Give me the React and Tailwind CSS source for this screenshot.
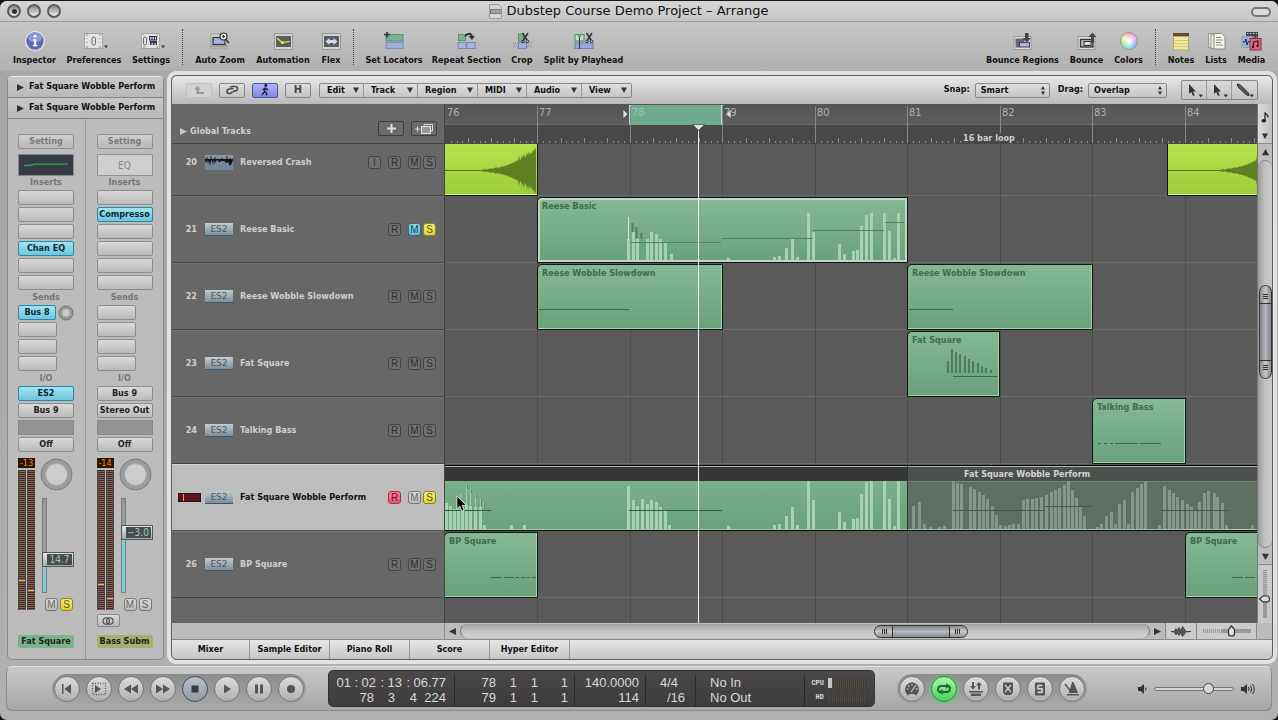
import React from "react";

/* ---------- data ---------- */

const BAR = 92.5;

const tracks = [
  { num: 20, name: "Reversed Crash", audio: true, input: true },
  { num: 21, name: "Reese Basic", mute: true, solo: true },
  { num: 22, name: "Reese Wobble Slowdown" },
  { num: 23, name: "Fat Square" },
  { num: 24, name: "Talking Bass" },
  { num: 25, name: "Fat Square Wobble Perform", selected: true, rec: true, solo: true },
  { num: 26, name: "BP Square" },
];

const reeseBars = [
  [90, 21], [95, 28], [99, 21], [109, 21], [113, 28], [118, 26], [122, 21], [127, 17], [133, 6],
  [190, 2], [236, 3], [241, 4], [248, 12], [254, 21], [259, 3], [270, 47], [275, 28], [301, 16],
  [306, 6], [315, 9], [319, 10], [323, 34], [328, 45], [333, 47], [346, 47], [351, 29], [356, 2], [360, 47],
];

const wobbleBars = [
  [0, 26], [4, 23], [8, 20], [12, 20], [16, 22], [20, 24], [24, 23], [29, 22], [34, 22], [38, 4], [65, 4], [78, 4],
  [182, 43], [187, 29], [191, 23], [196, 30], [201, 25], [205, 29], [210, 27], [214, 22], [219, 19], [223, 4],
  [282, 3], [328, 4], [333, 5], [340, 13], [346, 22], [351, 4], [362, 48], [367, 29], [393, 17], [398, 7],
  [407, 10], [411, 11], [415, 35], [420, 47], [425, 48], [438, 48], [443, 30], [448, 3], [452, 48],
];

const mutedBars = [
  [467, 23], [473, 27], [478, 5], [484, 2], [493, 2], [498, 3], [507, 48], [511, 46], [515, 45], [524, 42],
  [528, 40], [533, 37], [537, 34], [541, 30], [546, 23], [550, 14], [554, 4], [559, 3], [563, 4], [567, 5],
  [572, 5], [577, 29], [581, 30], [586, 30], [590, 31], [595, 32], [600, 34], [605, 37], [609, 39], [613, 41],
  [618, 44], [622, 48], [626, 39], [630, 31], [634, 23], [638, 13], [651, 2], [655, 5], [660, 13], [665, 17],
  [669, 5], [673, 25], [678, 29], [682, 5], [686, 37], [691, 41], [695, 45], [699, 48], [713, 4], [718, 43],
  [723, 39], [727, 36], [731, 32], [736, 29], [741, 25], [745, 22], [749, 19], [753, 27], [758, 36], [762, 38],
  [768, 36], [771, 32], [776, 26], [780, 4], [806, 4],
];

const fatBars = [
  [39, 12, 12], [43, 0, 24], [47, 3, 21], [51, 5, 19], [56, 7, 17], [60, 10, 14], [64, 12, 12], [69, 14, 10], [73, 17, 7], [77, 19, 5], [82, 21, 3],
];

const crash = [
  0, 0, 1, 0, 1, 1, 0, 1, 1, 2, 1, 2, 1, 2, 2, 3, 2, 3, 2, 3, 3, 4, 3, 4, 4, 5, 4, 6, 5, 6, 7, 6, 8, 7, 9,
  8, 10, 9, 15, 10, 11, 15, 12, 17, 12, 14, 18, 14, 19, 15, 18, 16, 21, 18, 23, 20,
];

/* ---------- small parts ---------- */

const Tri = ({ dir = "right", s = 7, fill = "#333" }) => {
  const d = { right: "M0 0L10 5L0 10z", left: "M10 0L0 5L10 10z", down: "M0 1L10 1L5 10z", up: "M0 9L10 9L5 0z" }[dir];
  return (
    <svg width={s} height={s} viewBox="0 0 10 10" className="shrink-0" aria-hidden="true">
      <path d={d} fill={fill} />
    </svg>
  );
};

function ToolButton({ label, w, children }) {
  return (
    <button className={"flex shrink-0 flex-col items-center gap-px " + w}>
      <span className="flex h-6 items-center justify-center">{children}</span>
      <span className="text-[9px] leading-[12px] font-bold whitespace-nowrap">{label}</span>
    </button>
  );
}

const Sep = () => <div className="mx-px h-9 w-px shrink-0 border-l border-dotted border-[#444]" />;

const toneOff = "border-[#777] bg-linear-to-b from-[#dadada] to-[#bcbcbc] text-[#666]";
const toneDark = "border-[#444] bg-[#707070] text-[#2e2e2e]";
const toneYellow = "border-[#8d8420] bg-linear-to-b from-[#f3ec6e] to-[#dcd23c] text-[#5c5610]";
const toneBlue = "border-[#2e6d82] bg-linear-to-b from-[#8fd9ee] to-[#5db9d4] text-[#174a5c]";
const tonePink = "border-[#a5304f] bg-linear-to-b from-[#ff7d9b] to-[#ee4f75] text-[#6d0f28]";

function Mini({ letter, tone, label }) {
  return (
    <button
      aria-label={label}
      className={
        "flex h-[13px] w-[13px] shrink-0 items-center justify-center rounded-[3px] border font-['Liberation_Sans',sans-serif] text-[10px] leading-[11px] " +
        tone
      }
    >
      {letter}
    </button>
  );
}

/* ---------- toolbar icons ---------- */

const InfoIcon = () => (
  <svg width="22" height="22" viewBox="0 0 22 22">
    <circle cx="11" cy="11" r="10" fill="#e9e9f2" />
    <circle cx="11" cy="11" r="8.7" fill="#5d6cb4" />
    <ellipse cx="11" cy="7.5" rx="7" ry="5" fill="#8d99d3" />
    <circle cx="11" cy="6.3" r="1.5" fill="#fff" />
    <path d="M9 9.3h3.2v5.8h1.3v1.2H8.8v-1.2h1.3v-4.6H9z" fill="#fff" />
  </svg>
);
const PrefIcon = () => (
  <svg width="24" height="18" viewBox="0 0 24 18" className="ml-[3px]">
    <rect x=".5" y="1.5" width="18" height="15" fill="#e3e3e3" stroke="#a5a5a5" />
    <path d="M2 3h2M15 3h2M2 15h2M15 15h2M3 6v1M3 10v1M16 6v1M16 10v1" stroke="#888" />
    <rect x="8" y="5" width="3.5" height="8" rx="1.7" fill="none" stroke="#666" />
    <path d="M20 13.5h4l-2 2.8z" fill="#333" />
  </svg>
);
const SettingsIcon = () => (
  <svg width="24" height="18" viewBox="0 0 24 18" className="ml-[3px]">
    <rect x=".5" y="1.5" width="18" height="15" fill="#e3e3e3" stroke="#a5a5a5" />
    <rect x="2.5" y="5" width="3" height="8" rx="1.5" fill="none" stroke="#666" />
    <rect x="8" y="4" width="8" height="4.5" fill="#cdd0de" />
    <path d="M8 4.500h8M8 8h8M8.500 4v4M11 4v4M13.500 4v4M15.700 4v4" stroke="#30334a" />
    <path d="M8.500 9h7.500v4h-1.300v-2.300h-1.200V13h-1.700v-2.300h-1.200V13H9V11z" fill="#30334a" />
    <path d="M2 3h1M16 3h1M2 15h2M15 15h2" stroke="#888" />
    <path d="M20 13.500h4l-2 2.800z" fill="#333" />
  </svg>
);
const AutoZoomIcon = () => (
  <svg width="20" height="18" viewBox="0 0 20 18">
    <rect x="1" y="2" width="16" height="14" fill="#d4d4d4" stroke="#999" />
    <rect x="3" y="5.500" width="12" height="7" fill="#a7aee0" stroke="#333" strokeWidth="1.200" />
    <path d="M1 14h16" stroke="#777" />
    <circle cx="13.500" cy="4.500" r="3.500" fill="#eee" stroke="#333" strokeWidth="1.200" />
    <path d="M12 4.500h3M13.500 3v3M16 7.500l3 3.500" stroke="#333" strokeWidth="1.200" />
  </svg>
);
const AutomationIcon = () => (
  <svg width="19" height="17" viewBox="0 0 19 17">
    <rect x=".5" y=".5" width="18" height="16" fill="#d2d2d2" stroke="#999" />
    <rect x="2" y="3" width="15" height="11" fill="#585e58" />
    <path d="M3 5l5 4.500L16 8.500" stroke="#e8e34c" fill="none" strokeWidth="1.200" />
    <circle cx="8.500" cy="9.500" r="1.600" fill="#e8e34c" />
  </svg>
);
const FlexIcon = () => (
  <svg width="19" height="17" viewBox="0 0 19 17">
    <rect x=".5" y=".5" width="18" height="16" fill="#d2d2d2" stroke="#999" />
    <rect x="2" y="3" width="15" height="11" fill="#585d63" />
    <path d="M3.500 8.500l4-3.500v2h4V5l4 3.500-4 3.500v-2h-4v2z" fill="#cfd8e6" />
  </svg>
);
const LocatorsIcon = () => (
  <svg width="20" height="18" viewBox="0 0 20 18">
    <rect x="2" y="2.500" width="17" height="6.500" fill="#77b295" stroke="#5b9478" />
    <rect x="2" y="10.500" width="17" height="6" fill="#9fb0da" stroke="#7f90b8" />
    <path d="M0 2.500h6M3 0v5.500" stroke="#333" strokeWidth="1.600" />
  </svg>
);
const RepeatIcon = () => (
  <svg width="19" height="18" viewBox="0 0 19 18">
    <rect x="1.500" y="2.500" width="7" height="6" fill="#77b295" stroke="#5b9478" />
    <rect x="1" y="10.500" width="8" height="6" fill="#a6b8de" stroke="#7486ae" />
    <rect x="10" y="10.500" width="8" height="6" fill="#a6b8de" stroke="#7486ae" />
    <path d="M8 4.500C10.500.5 14 1 15 4" stroke="#333" fill="none" strokeWidth="2" />
    <path d="M11.500 4h6.500l-3 4z" fill="#333" />
  </svg>
);
const Scissors = ({ x }) => (
  <g transform={"translate(" + x + " 0)"} stroke="#333" fill="none">
    <path d="M1 1l4.500 7M6.500 1L2 8" strokeWidth="1.500" />
    <circle cx="1.500" cy="9.300" r="1.300" />
    <circle cx="6" cy="9.300" r="1.300" />
  </g>
);
const CropIcon = () => (
  <svg width="19" height="18" viewBox="0 0 19 18">
    <rect x="5.500" y="2" width="5" height="7" fill="#77b295" stroke="#5b9478" />
    <path d="M0 11h19M1 13h18M0 15h19" stroke="#7f8cae" strokeDasharray="1 1" />
    <rect x="5.500" y="10.500" width="8" height="6" fill="#a6b0de" stroke="#7486ae" />
    <Scissors x={8.5} />
  </svg>
);
const SplitIcon = () => (
  <svg width="20" height="18" viewBox="0 0 20 18">
    <rect x="1" y="2.500" width="9" height="6.500" fill="#c6dccf" stroke="#4b8468" />
    <rect x="1" y="11" width="18" height="5.500" fill="#8fa9dd" stroke="#6c80b2" />
    <path d="M2.500 2h6L5.500 6z" fill="#5a9c79" />
    <path d="M5.500 5v12" stroke="#333" />
    <Scissors x={11.5} />
  </svg>
);
const BounceIcon = ({ up }) => (
  <svg width="20" height="19" viewBox="0 0 20 19">
    <rect x="1" y="4.500" width="17" height="13" fill="#dadada" stroke="#999" />
    {up ? (
      <g>
        <rect x="3.500" y="7.500" width="12.500" height="7.500" fill="#bbb" stroke="#333" strokeWidth="1.300" />
        <rect x="7" y="9.500" width="7" height="4" fill="#d5d9ee" stroke="#333" />
        <path d="M14 11V5h-2.700L15.500.5 19.500 5H17v6z" fill="#444" />
      </g>
    ) : (
      <g>
        <path d="M2.500 6.500h9v4h-5v5h-4z" fill="#666" />
        <rect x="6.500" y="10.500" width="10" height="4.500" fill="#aab0e0" stroke="#444" />
        <path d="M12 1v5H9.500l4.300 4.500L18 6h-2.500V1z" fill="#444" />
      </g>
    )}
  </svg>
);
const ColorsIcon = () => (
  <div className="h-[18px] w-[18px] rounded-full border border-[#999] bg-[radial-gradient(circle,#fff_5%,transparent_70%),conic-gradient(#f5a0a8,#e7a7ee,#93a6f4,#7fe3ee,#86e88f,#f0ee86,#f5a0a8)]" />
);
const NotesIcon = () => (
  <svg width="18" height="19" viewBox="0 0 18 19">
    <rect x="1" y="1" width="16" height="4" fill="#5b4c33" />
    <rect x="1.500" y="4.500" width="15" height="13.500" fill="#eeeaa0" stroke="#b3ab65" />
    <path d="M2 8.500h14M2 11.500h14M2 14.500h14" stroke="#cfc87c" />
  </svg>
);
const ListsIcon = () => (
  <svg width="19" height="19" viewBox="0 0 19 19">
    <rect x="1.500" y="1.500" width="11" height="14" fill="#e3e3dc" stroke="#999" />
    <rect x="4" y="2.500" width="10" height="14" fill="#eeeee4" stroke="#999" />
    <path d="M7 1.500h8l3 3v12.500H7z" fill="#f5f5e6" stroke="#888" />
    <path d="M9 5.500h5M9 8h7M9 10.500h5M9 13h7" stroke="#888" />
  </svg>
);
const MediaIcon = () => (
  <svg width="21" height="20" viewBox="0 0 21 20">
    <rect x="5" y="1" width="12" height="6" fill="#444" />
    <path d="M6 2.500h10M6 6h10" stroke="#ccc" strokeDasharray="1.500 1.500" />
    <rect x="1" y="5.500" width="10" height="11" fill="#9db1d6" stroke="#8fa1c4" />
    <path d="M2 11h2l1-3 1 6 1.500-4 1 1h2" stroke="#1d2a4a" fill="none" />
    <rect x="9" y="7.500" width="11" height="11.500" fill="#d8697f" stroke="#8d2f44" />
    <path d="M12.500 16v-5l4.500-1v5" stroke="#4c0c1b" fill="none" strokeWidth="1.200" />
    <circle cx="12" cy="16" r="1.200" fill="#4c0c1b" />
    <circle cx="16.500" cy="15" r="1.200" fill="#4c0c1b" />
  </svg>
);

/* ---------- inspector ---------- */

const slotBase =
  "flex h-[15px] items-center justify-center overflow-hidden whitespace-nowrap rounded-[2px] border text-[9px] leading-[13px] font-bold ";
const slotGrey = "border-[#8c8c8c] bg-linear-to-b from-[#d9d9d9] to-[#bababa] text-[#222] ";
const slotBlue = "border-[#2b87a5] bg-linear-to-b from-[#a5e3f2] to-[#6cc5dc] text-[#0b2a36] ";

const Slot = ({ text, blue, w = "w-full" }) => (
  <button aria-label={text || "Empty slot"} className={slotBase + (blue ? slotBlue : slotGrey) + w}>
    {text}
  </button>
);
const StripLabel = ({ children }) => (
  <div className="h-[15px] text-center text-[9px] leading-[15px] font-bold text-[#757575]">{children}</div>
);

function Strip({ pad, setting, eq, inserts, sends, inst, out, peak, fader, value, solo, stereo, name, nameTone, lit }) {
  return (
    <div className={"flex flex-1 flex-col pt-[15px] " + pad}>
      <div className="flex w-14 flex-col">
        <button className={slotBase + "border-[#909090] bg-linear-to-b from-[#cfcfcf] to-[#b8b8b8] text-[#7a7a7a]"}>{setting}</button>
        {eq ? (
          <svg width="56" height="22" viewBox="0 0 56 22" className="mt-[5px] -mb-px border border-[#888] bg-[#363b48]">
            <path d="M4 11.500h6l5-1.500h37" stroke="#2fae3a" strokeWidth="1.500" fill="none" />
          </svg>
        ) : (
          <button className="mt-[5px] -mb-px h-[22px] border border-[#909090] bg-[#cfcfcf] text-[10px] text-[#888]">EQ</button>
        )}
        <StripLabel>Inserts</StripLabel>
        <div className="flex flex-col gap-[2px]">
          {inserts.map((t, i) => (
            <Slot key={i} text={t} blue={!!t} />
          ))}
        </div>
        <StripLabel>Sends</StripLabel>
        <div className="flex flex-col gap-[2px]">
          {sends.map((t, i) => (
            <div key={i} className="flex h-[15px] items-center gap-[2px]">
              <Slot text={t} blue={!!t} w="w-[39px]" />
              {t && (
                <svg width="16" height="16" viewBox="0 0 16 16" className="shrink-0">
                  <circle cx="8" cy="8" r="7" fill="#9c9c9c" stroke="#6e6e6e" />
                  <circle cx="8" cy="8" r="4.300" fill="#cacaca" stroke="#808080" strokeWidth=".6" />
                  <path d="M3 10.500a5.500 5.500 0 0 0 1.500 2" stroke="#4fc77a" strokeWidth="1.500" fill="none" />
                </svg>
              )}
            </div>
          ))}
        </div>
        <StripLabel>I/O</StripLabel>
        <div className="flex flex-col gap-[2px]">
          <Slot text={inst} blue={eq} />
          <Slot text={out} />
          <div className="h-[15px] border border-[#888] bg-[#939393]" />
          <Slot text="Off" />
        </div>
        <div className="mt-[6px] flex h-[153px] gap-[5px]">
          <div className="flex w-[17px] flex-col gap-[2px]">
            <div className="h-[10px] bg-[#2a1503] text-center text-[9px] leading-[10px] text-[#f08a1c]">{peak}</div>
            <div className="flex h-[140px] gap-px">
              {lit.map((y, i) => (
                <div key={i} className="flex-1 border-x border-[#4b4340] bg-[repeating-linear-gradient(#4a2c27_0_1px,#7d6259_1px_2px)]">
                  <div className="border-b border-[#e8b84a]" style={{ height: y }} />
                </div>
              ))}
            </div>
          </div>
          <div className="flex w-[33px] flex-col">
            <svg width="33" height="33" viewBox="0 0 33 33" className="shrink-0">
              <circle cx="16.500" cy="16.500" r="15.500" fill="#9d9d9d" stroke="#7c7c7c" />
              <circle cx="16.500" cy="16.500" r="11" fill="#cdcdcd" stroke="#a5a5a5" />
            </svg>
            <div className="relative mt-[7px] h-[95px]">
              <div className="ml-[2px] flex h-full w-[5px] flex-col border border-[#7d7d7d] bg-[#999]">
                <div className="mt-auto bg-[#7fd0de]" style={{ height: 93 - fader }} />
              </div>
              <div
                className="absolute left-[2px] flex h-[15px] w-[32px] items-center border border-[#555] bg-linear-to-b from-[#e8e8e8] to-[#aaa] pr-px pl-1"
                style={{ top: fader }}
              >
                <span className="flex h-[11px] flex-1 items-center justify-center bg-[#454d4d] text-[10px] text-[#a5c4c2]">{value}</span>
              </div>
              <input type="range" aria-label={name + " volume"} className="absolute inset-0 h-full w-full cursor-pointer opacity-0" />
            </div>
            <div className="mt-[5px] flex justify-between pl-[5px]">
              <Mini letter="M" label="Mute" tone={toneOff} />
              <Mini letter="S" label="Solo" tone={solo ? toneYellow : toneOff} />
            </div>
          </div>
        </div>
        <div className="mt-[3px] h-[13px]">
          {stereo && (
            <button aria-label="Stereo" className="flex h-full w-[23px] items-center justify-center rounded-[2px] border border-[#878787] bg-linear-to-b from-[#d9d9d9] to-[#bababa]">
              <svg width="12" height="8" viewBox="0 0 12 8" fill="none" stroke="#444" strokeWidth="1.100">
                <circle cx="4.200" cy="4" r="3.200" />
                <circle cx="7.800" cy="4" r="3.200" />
              </svg>
            </button>
          )}
        </div>
        <div className={"mt-2 h-[13px] overflow-hidden rounded-[2px] text-center text-[9px] leading-[13px] font-bold whitespace-nowrap text-[#222] " + nameTone}>{name}</div>
      </div>
    </div>
  );
}

function Inspector() {
  return (
    <aside className="mt-[5px] mb-1 flex w-[157px] shrink-0 flex-col rounded-[5px] border border-[#888] border-t-[#e6e6e6] bg-[#bcbcbc]">
      {[0, 1].map((i) => (
        <button key={i} className="flex h-[21px] items-center gap-[5px] border-b border-[#858585] bg-linear-to-b from-[#c8c8c8] to-[#b9b9b9] pl-[9px] text-[9px] font-bold">
          <Tri s={7} />
          <span className="whitespace-nowrap">Fat Square Wobble Perform</span>
        </button>
      ))}
      <div className="flex flex-1">
        <Strip
          pad="border-r border-[#999] pl-[10px]"
          setting="Setting"
          eq
          inserts={["", "", "", "Chan EQ", "", ""]}
          sends={["Bus 8", "", "", ""]}
          inst="ES2"
          out="Bus 9"
          peak="-13"
          fader={54}
          value="14.7"
          solo
          name="Fat Square"
          nameTone="bg-[#7ab48a]"
          lit={[111, 121]}
        />
        <Strip
          pad="pl-[11px]"
          setting="Setting"
          inserts={["", "Compresso", "", "", "", ""]}
          sends={["", "", "", ""]}
          inst="Bus 9"
          out="Stereo Out"
          peak="-14"
          fader={27}
          value="−3.0"
          stereo
          name="Bass Subm"
          nameTone="bg-[#a8ae6c]"
          lit={[115, 129]}
        />
      </div>
    </aside>
  );
}

/* ---------- arrange area ---------- */

const iconBtn = "flex h-[15px] w-[26px] items-center justify-center rounded-[2px] border ";

function MenuBar() {
  const menus = [
    ["Edit", "w-[44px]"],
    ["Track", "w-[54px]"],
    ["Region", "w-[60px]"],
    ["MIDI", "w-[49px]"],
    ["Audio", "w-[55px]"],
    ["View", "w-[49px]"],
  ];
  const select =
    "h-[15px] appearance-none rounded-[2px] border border-[#888] bg-linear-to-b from-[#dedede] to-[#c6c6c6] pl-[5px] leading-[12px] ";
  const arrows = (
    <span className="pointer-events-none absolute top-[3px] right-[5px] flex flex-col gap-px">
      <Tri dir="up" s={4} />
      <Tri dir="down" s={4} />
    </span>
  );
  return (
    <div className="flex h-7 items-center bg-linear-to-b from-[#e9e9e9] to-[#b9b9b9] pr-[14px] pl-[14px] text-[9px] font-bold">
      <div className="flex gap-[7px]">
        <button aria-label="Up" className={iconBtn + "border-[#c2c2c2] bg-[#d2d2d2]"}>
          <svg width="11" height="9" viewBox="0 0 11 9"><path d="M3.500 0L0 3.500h2.500V8H10V6H5V3.500h2z" fill="#999" /></svg>
        </button>
        <button aria-label="Link" className={iconBtn + "border-[#888] bg-linear-to-b from-[#ddd] to-[#c4c4c4]"}>
          <svg width="13" height="10" viewBox="0 0 13 10" fill="none" stroke="#444" strokeWidth="1.600">
            <path d="M7 6.500L10.500 5.500a2.200 2.200 0 0 0-.5-4H6a3 3 0 0 0-2 1" />
            <path d="M7.500 3.500L3.500 4A2.200 2.200 0 0 0 3 8.500h1a3 3 0 0 0 2.500-2" />
          </svg>
        </button>
        <button aria-label="Catch" className={iconBtn + "border-[#4a52a8] bg-linear-to-b from-[#b0b5f2] to-[#8088dc]"}>
          <svg width="10" height="12" viewBox="0 0 10 12" stroke="#23264d" fill="none" strokeWidth="1.500">
            <circle cx="5.800" cy="1.500" r=".8" />
            <path d="M5 3.500L4.500 7l2 2v2.500M4.500 7.500L2 11M5 4L2.500 6M5.500 4.500L8 6" />
          </svg>
        </button>
        <button className={iconBtn + "border-[#888] bg-linear-to-b from-[#ddd] to-[#c4c4c4] text-[11px] text-[#444]"}>H</button>
      </div>
      <div className="ml-2 flex h-[15px] divide-x divide-[#999] rounded-[2px] border border-[#888] bg-linear-to-b from-[#dedede] to-[#c6c6c6]">
        {menus.map(([m, w]) => (
          <button key={m} className={"flex items-center justify-between pr-[4px] pl-[7px] leading-[13px] " + w}>
            {m}
            <Tri dir="down" s={6} />
          </button>
        ))}
      </div>
      <div className="ml-auto flex items-center">
        <label htmlFor="snap">Snap:</label>
        <div className="relative ml-[5px]">
          <select id="snap" className={select + "w-[75px]"}>
            <option>Smart</option>
          </select>
          {arrows}
        </div>
        <label htmlFor="drag" className="ml-2">Drag:</label>
        <div className="relative ml-[5px]">
          <select id="drag" className={select + "w-[79px]"}>
            <option>Overlap</option>
          </select>
          {arrows}
        </div>
        <div className="ml-[14px] flex h-5 divide-x divide-[#999] rounded-[2px] border border-[#888] bg-linear-to-b from-[#dadada] to-[#c2c2c2]">
          {["Left-click tool", "Command-click tool", "Pencil tool"].map((t, i) => (
            <button key={t} aria-label={t} className="flex w-[25px] items-center justify-center">
              <svg width="18" height="15" viewBox="0 0 18 15">
                {i < 2 ? (
                  <path d="M4 1v10l2.300-2 1.700 4 1.700-.8L8 8.500h3z" fill="#333" />
                ) : (
                  <path d="M1 1l3 .5 8.500 8.500 .5 2.500-2.500-.5L2 4z" fill="#555" stroke="#222" strokeWidth=".8" />
                )}
                <path d="M13.500 11.500h4.500l-2.200 2.800z" fill="#333" />
              </svg>
            </button>
          ))}
        </div>
      </div>
    </div>
  );
}

function TrackIcon({ audio }) {
  if (audio)
    return (
      <svg width="28" height="15" viewBox="0 0 28 15">
        <rect width="28" height="15" fill="#74869b" />
        <rect width="28" height="3" fill="#8d969e" />
        <path d="M0 4h28v1l-1.500 4-1.500 2-2-4-2 1-2-2-3 0-2 1.500-1.500-2.500-1.500 1L10 9 9 5 8 10 7 5.500 6 6 5 11 4 5.500 3 9 2 5 1 8 0 6z" fill="#14161a" />
        <path d="M2 4V2M6 4V1M10 4V2M17 4V3M22 4V1M25 4V3" stroke="#14161a" />
      </svg>
    );
  return (
    <span className="flex h-[13px] w-[28px] items-center justify-center border-b border-[#3f5468] bg-linear-to-b from-[#c3cccf] to-[#7d8f9b] font-['DejaVu_Sans',sans-serif] text-[9px] leading-[12px] text-[#4a5a64]">
      ES2
    </span>
  );
}

function TrackRow({ t }) {
  const sel = t.selected;
  const off = sel ? toneOff : toneDark;
  return (
    <li
      className={
        "flex shrink-0 items-end overflow-hidden border-b text-[9px] " +
        (t.num === 20 ? "h-[52px] " : "h-[67px] ") +
        (sel ? "border-[#555] bg-[#bdbdbd] text-[#111]" : "border-[#464646] bg-[#676767] text-[#cfcfcf]")
      }
    >
      <div className={"flex h-[66px] w-full shrink-0 items-center border-t pr-2 pl-[5px] " + (sel ? "border-[#d0d0d0]" : "border-[#727272]")}>
        <span className="mr-2 flex w-5 justify-end font-bold">
          {sel ? (
            <span className="-mr-1 flex h-[9px] w-[23px] shrink-0 border border-[#2a1110] bg-[#5a1420] pl-1">
              <span className="w-px bg-[#f0a030]" />
            </span>
          ) : (
            t.num
          )}
        </span>
        <TrackIcon audio={t.audio} />
        <span className="ml-[7px] font-bold whitespace-nowrap">{t.name}</span>
        <div className="ml-auto flex">
          {t.input && (
            <span className="mr-[7px]">
              <Mini letter="I" label="Input" tone={off} />
            </span>
          )}
          <Mini letter="R" label="Record enable" tone={t.rec ? tonePink : off} />
          <span className="mr-[2px] ml-[7px]">
            <Mini letter="M" label="Mute" tone={t.mute ? toneBlue : off} />
          </span>
          <Mini letter="S" label="Solo" tone={t.solo ? toneYellow : off} />
        </div>
      </div>
    </li>
  );
}

function Region({ x, w, name, selected, children }) {
  return (
    <div
      className="absolute top-px h-[66px] overflow-hidden rounded-tl-[5px] border border-[#0d1a10] bg-linear-to-b from-[#84b993] to-[#69a17a]"
      style={{ left: x, width: w }}
    >
      <div className={"h-full rounded-tl-[4px] " + (selected ? "border-2 border-[#c5d3c8]" : "border-r border-b border-[#a6d2b2]")} />
      <span className="absolute top-[2px] left-1 text-[9px] leading-[12px] font-bold whitespace-nowrap text-[#3d6c4c]">{name}</span>
      {children}
    </div>
  );
}

function CrashRegion({ x, w, start, edge }) {
  const top = crash.map((h, i) => start + i + " " + (26 - h)).join("L");
  const bot = crash.map((h, i) => start + i + " " + (27 + h)).reverse().join("L");
  return (
    <div
      className={"absolute top-0 h-[52px] overflow-hidden border-r border-b border-[#141a05] bg-linear-to-b from-[#b3e44d] to-[#9ccd3a] " + (edge ? "border-l" : "")}
      style={{ left: x, width: w }}
    >
      <svg width="110" height="52" viewBox="0 0 110 52">
        <path d={"M0 26.500H" + (start + 5)} stroke="#566f1b" />
        <path d={"M" + top + "L" + bot + "z"} fill="#5f7f22" />
        <path d="M0 50.500h110" stroke="#d5f092" />
      </svg>
    </div>
  );
}

const Overlay = ({ w, h, children }) => (
  <svg width={w} height={h} viewBox={"0 0 " + w + " " + h} className="absolute top-0 left-0">
    {children}
  </svg>
);

function Lane({ short, children }) {
  return <div className={"relative shrink-0 border-b border-[#6b6b6b] " + (short ? "h-[52px]" : "h-[67px]")}>{children}</div>;
}

function Ruler() {
  const ticks = [];
  for (let i = 0; i < 16 * 9; i++) if (i % 16) ticks.push(i);
  return (
    <div className="relative h-10 shrink-0 overflow-hidden bg-[#484848]">
      <div className="h-[21px] border-b border-[#6a6a6a] bg-linear-to-b from-[#545454] to-[#5d5d5d]" />
      <div className="absolute top-px h-5 border-x-2 border-[#b9dcc8] bg-[#6fab8e]" style={{ left: 184, width: 94 }} />
      <svg width="900" height="40" viewBox="0 0 900 40" className="absolute top-0 left-0">
        {ticks.map((i) => (
          <path key={i} d={"M" + (Math.round((i * BAR) / 16) + 0.5) + " " + (i % 4 ? 37 : 34) + "V39"} stroke="#8b8b8b" />
        ))}
        {[1, 2, 3, 4, 5, 6, 7, 8].map((b) => (
          <path key={b} d={"M" + (Math.floor(b * BAR) + 0.5) + " 2V39"} stroke="#888" />
        ))}
        <path d="M178 5v10l5-5zM286 5v10l-5-5z" fill="#ddd" stroke="#333" strokeWidth=".6" />
      </svg>
      {[76, 77, 78, 79, 80, 81, 82, 83, 84].map((b, i) => (
        <span
          key={b}
          className={"absolute top-px text-[11px] leading-[15px] " + (b === 78 ? "text-[#93c6ac]" : "text-[#b0b0b0]")}
          style={{ left: Math.floor(i * BAR) + 2 }}
        >
          {b}
        </span>
      ))}
      <span className="absolute top-[29px] left-[516px] bg-[#484848] px-[2px] text-[9px] leading-[11px] font-bold text-[#cfcfcf]">16 bar loop</span>
    </div>
  );
}

function Timeline() {
  return (
    <div className="relative flex min-w-0 flex-1 flex-col overflow-hidden">
      <Ruler />
      <div className="relative flex flex-1 flex-col bg-[#5a5a5a]">
        <div className="absolute inset-0">
          <svg width="900" height="480" viewBox="0 0 900 480">
            {[1, 2, 3, 4, 5, 6, 7, 8].map((b) => (
              <path key={b} d={"M" + (Math.floor(b * BAR) + 0.5) + " 0V480"} stroke="#4b4b4b" />
            ))}
          </svg>
        </div>
        <Lane short>
          <CrashRegion x={0} w={93} start={36} />
          <CrashRegion x={722} w={111} start={51} edge />
        </Lane>
        <Lane>
          <Region x={92} w={371} name="Reese Basic" selected>
            <Overlay w={369} h={64}>
              {reeseBars.map(([x, h]) => (
                <rect key={x} x={x - 1} y={62 - h} width="3" height={h} fill="#a6d2b3" />
              ))}
              <path d="M90.500 19V42" stroke="#cfe6d4" />
              <path d="M94.500 25v9M98.500 29v11M103.500 35v6" stroke="#4f7f5e" strokeWidth="2" />
              <path d="M92 44.500h91M184 40.500h91M275 32.500h71M347 24.500h19" stroke="#4e8260" />
            </Overlay>
          </Region>
        </Lane>
        <Lane>
          <Region x={92} w={186} name="Reese Wobble Slowdown">
            <Overlay w={184} h={64}><path d="M1 44.500h90" stroke="#38694a" /></Overlay>
          </Region>
          <Region x={462} w={186} name="Reese Wobble Slowdown">
            <Overlay w={184} h={64}><path d="M1 44.500h44" stroke="#38694a" /></Overlay>
          </Region>
        </Lane>
        <Lane>
          <Region x={462} w={93} name="Fat Square">
            <Overlay w={91} h={64}>
              {fatBars.map(([x, y, h]) => (
                <rect key={x} x={x} y={17 + y} width="2" height={h} fill="#4c7d5b" />
              ))}
              <path d="M45 44.500h45" stroke="#38694a" />
            </Overlay>
          </Region>
        </Lane>
        <Lane>
          <Region x={647} w={94} name="Talking Bass">
            <Overlay w={92} h={64}>
              <path d="M5 44.500h3M11 44.500h3M17 44.500h3M22 44.500h23M47 44.500h21" stroke="#38694a" />
            </Overlay>
          </Region>
        </Lane>
        <Lane>
          <div className="absolute top-px right-0 left-0 h-[66px] overflow-hidden border-y border-black bg-linear-to-b from-[#7fb58f] to-[#69a17a]">
            <Overlay w={900} h={64}>
              <rect x="463" y="0" width="437" height="64" fill="#5f6d62" />
              <rect x="0" y="0" width="463" height="15" fill="#353735" />
              <rect x="463" y="0" width="437" height="15" fill="#4b504c" />
              <path d="M0 .5H900" stroke="#b5b5b5" />
              <path d="M463 15.500H900" stroke="#75877a" />
              <path d="M0 63.500H900" stroke="#a6d2b2" />
              <path d="M462.500 0V64" stroke="#2a3a2f" />
              {wobbleBars.map(([x, h]) => (
                <rect key={x} x={x} y={63 - h} width="3" height={h} fill="#a6d2b3" />
              ))}
              {mutedBars.map(([x, h]) => (
                <rect key={x} x={x} y={63 - h} width="3" height={h} fill="#85978a" />
              ))}
              <path d="M15.500 28V43M21.500 19v22M25.500 23v18M30.500 28v15M35.500 33v10M38.500 36v6" stroke="#9fcdad" />
              <path d="M22.500 19v4M26.500 24v3M31.500 29v3M36.500 34v6M39.500 37v5" stroke="#4f7f5e" />
              <path d="M0 44.500h46M184 44.500h93" stroke="#2f5a3e" />
              <path d="M508 44.500h92M600 40.500h47M716 44.500h68" stroke="#4a554d" />
            </Overlay>
            <span className="absolute top-[2px] left-[519px] text-[9px] leading-[12px] font-bold whitespace-nowrap text-[#d5d5d5]">Fat Square Wobble Perform</span>
          </div>
        </Lane>
        <Lane>
          <Region x={-1} w={94} name="BP Square">
            <Overlay w={92} h={64}><path d="M46 44.500h11M59 44.500h10M71 44.500h3M76 44.500h4M82 44.500h3M87 44.500h4" stroke="#38694a" /></Overlay>
          </Region>
          <Region x={740} w={94} name="BP Square">
            <Overlay w={92} h={64}><path d="M46 44.500h11M59 44.500h10M71 44.500h3" stroke="#38694a" /></Overlay>
          </Region>
        </Lane>
      </div>
      <div className="pointer-events-none absolute top-5 bottom-0 left-[247px] w-[13px]">
        <svg width="13" height="7" viewBox="0 0 13 7"><path d="M.5.500h12L6.500 6.500z" fill="#d4ecc9" stroke="#444" strokeWidth=".7" /></svg>
        <div className="ml-[6px] h-full w-px bg-[#f2f2f2]" />
      </div>
      <svg width="12" height="18" viewBox="0 0 12 18" className="pointer-events-none absolute top-[391px] left-[11px]">
        <path d="M.8 1v13l3-2.800 2 5 2.400-1-2-4.800h4.300z" fill="#0a0a0a" stroke="#e8e8e8" strokeWidth=".9" />
      </svg>
    </div>
  );
}

function VerticalBar() {
  return (
    <div className="flex w-[15px] shrink-0 flex-col items-center border-l border-[#777] bg-[#bdbdbd]">
      <div className="flex h-10 w-full flex-col items-center justify-between border-b border-[#888] bg-linear-to-r from-[#dadada] to-[#c0c0c0] pt-2 pb-1">
        <svg width="9" height="11" viewBox="0 0 9 11"><path d="M4 8.500V.5c.5 2 3.500 2 3 5" fill="none" stroke="#222" strokeWidth="1.200" /><ellipse cx="2.800" cy="8.700" rx="2.300" ry="1.700" fill="#222" /></svg>
        <Tri dir="down" s={6} />
      </div>
      <button aria-label="Scroll up" className="flex h-[16px] items-center"><Tri dir="up" s={7} /></button>
      <div className="flex w-full flex-1 flex-col rounded-full border-y border-[#888] bg-linear-to-r from-[#9b9b9b] via-[#c3c3c3] to-[#c9c9c9] pt-[124px]">
        <div className="mx-auto flex h-[94px] w-[13px] flex-col items-center justify-between rounded-full border border-[#333] bg-linear-to-r from-[#8a8a8a] via-[#c6c6c6] to-[#8a8a8a]">
          <svg width="11" height="18" viewBox="0 0 11 18"><path d="M3 8.500h5M3 10.500h5M3 12.500h5M0 17.500h11" stroke="#333" /></svg>
          <div className="w-full flex-1 bg-linear-to-r from-[#83838b] via-[#b4b4be] to-[#83838b]" />
          <svg width="11" height="18" viewBox="0 0 11 18"><path d="M3 5.500h5M3 7.500h5M3 9.500h5M0 .5h11" stroke="#333" /></svg>
        </div>
      </div>
      <button aria-label="Scroll down" className="flex h-[16px] items-center"><Tri dir="down" s={7} /></button>
      <svg width="14" height="59" viewBox="0 0 14 59" className="border-t border-[#888] bg-[#c9c9c9]">
        <path d="M7 5V30" stroke="#888" strokeWidth="4" strokeDasharray="1 1" />
        <path d="M7 30V54" stroke="#999" strokeWidth="4" />
        <path d="M1.500 34.500l3.500-3h4.500q2 0 2 3t-2 3H5z" fill="#ddd" stroke="#333" strokeWidth="1.200" />
      </svg>
    </div>
  );
}

function HorizontalBar() {
  return (
    <div className="flex h-[17px] shrink-0 border-b border-[#888] bg-[#bcbcbc]">
      <div className="w-[273px] shrink-0 border-r border-[#888]" />
      <div className="flex min-w-0 flex-1 items-center pl-1">
        <button aria-label="Scroll left" className="pr-1"><Tri dir="left" s={7} /></button>
        <div className="flex h-[14px] flex-1 items-center rounded-full border-x border-[#777] bg-linear-to-b from-[#a2a2a2] via-[#c4c4c4] to-[#cfcfcf]">
          <div className="ml-[60%] flex h-[13px] w-[94px] items-center justify-between rounded-full border border-[#333] bg-linear-to-b from-[#8a8a8a] via-[#c9c9c9] to-[#929292]">
            <svg width="18" height="11" viewBox="0 0 18 11"><path d="M7.500 3v5M9.500 3v5M11.500 3v5M17.500 0v11" stroke="#333" /></svg>
            <div className="h-full flex-1 bg-linear-to-b from-[#7f8287] via-[#b3bac2] to-[#878a8f]" />
            <svg width="18" height="11" viewBox="0 0 18 11"><path d="M6.500 3v5M8.500 3v5M10.500 3v5M.5 0v11" stroke="#333" /></svg>
          </div>
        </div>
        <button aria-label="Scroll right" className="px-1"><Tri dir="right" s={7} /></button>
        <button aria-label="Waveform zoom" className="flex h-full w-8 items-center justify-center border-x border-[#888] bg-[#cbcbcb]">
          <svg width="20" height="11" viewBox="0 0 20 11"><path d="M0 5.500h3l2-3 1.500 2 1.500-3 1.500 3 2-4 3.500 5h5l-5 .5-3.500 4.500-2-3.500-1.500 2.500L6.500 7 5 9 3 6z" fill="#555" stroke="#333" strokeWidth=".7" /></svg>
        </button>
        <div className="flex h-full w-[60px] items-center justify-center border-r border-[#888] bg-[#cbcbcb]">
          <svg width="50" height="12" viewBox="0 0 50 12">
            <path d="M1 6H28" stroke="#999" strokeWidth="4" strokeDasharray="1 1" />
            <path d="M20 6H49" stroke="#999" strokeWidth="4" />
            <path d="M29.500 1l3 3.500v4.500q0 2-3 2t-3-2V4.500z" fill="#ddd" stroke="#333" strokeWidth="1.200" />
          </svg>
        </div>
        <div className="w-[15px]" />
      </div>
    </div>
  );
}

function Arrange() {
  return (
    <main className="flex min-w-0 flex-1 flex-col rounded-[9px] border-4 border-[#e2e2e2]">
      <div className="flex min-w-0 flex-1 flex-col overflow-hidden rounded-[6px] border border-[#606060]">
        <MenuBar />
        <div className="flex flex-1">
          <div className="flex w-[273px] shrink-0 flex-col border-r border-[#444] bg-[#676767]">
            <div className="flex h-10 items-end border-b border-[#464646] pr-[7px] pb-[5px] pl-[8px] text-[#cfcfcf]">
              <button className="flex items-center gap-[3px] text-[9px] leading-[14px] font-bold">
                <Tri s={7} fill="#c4c4c4" />
                Global Tracks
              </button>
              <div className="mb-[2px] ml-auto flex gap-[7px]">
                <button aria-label="Add track" className="flex h-[15px] w-[26px] items-center justify-center rounded-[2px] border border-[#3d3d3d] bg-[#6b6b6b]">
                  <svg width="9" height="9" viewBox="0 0 9 9"><path d="M0 4.500h9M4.500 0v9" stroke="#ddd" strokeWidth="2" /></svg>
                </button>
                <button aria-label="Duplicate track" className="flex h-[15px] w-[26px] items-center justify-center rounded-[2px] border border-[#3d3d3d] bg-[#6b6b6b]">
                  <svg width="18" height="10" viewBox="0 0 18 10" stroke="#ddd" fill="none"><path d="M0 5h5M2.500 2.500v5" /><path d="M9 2.500V.5h8.500V7H15.500" /><rect x="6.500" y="2.500" width="9" height="7" fill="#999" /></svg>
                </button>
              </div>
            </div>
            <ul>
              {tracks.map((t) => (
                <TrackRow key={t.num} t={t} />
              ))}
            </ul>
          </div>
          <Timeline />
          <VerticalBar />
        </div>
        <HorizontalBar />
        <div className="flex h-[19px] bg-linear-to-b from-[#e6e6e6] to-[#c6c6c6] text-[9px] font-bold">
          {["Mixer", "Sample Editor", "Piano Roll", "Score", "Hyper Editor"].map((t, i) => (
            <button key={t} className={"border-r border-[#999] leading-[17px] whitespace-nowrap " + (i ? "w-20" : "w-[78px]")}>
              {t}
            </button>
          ))}
        </div>
      </div>
    </main>
  );
}

/* ---------- transport ---------- */

function Round({ label, tone = "border-[#777] from-[#dcdcdc] to-[#b0b0b0]", children }) {
  return (
    <button aria-label={label} className={"flex h-[26px] w-[26px] items-center justify-center rounded-full border bg-linear-to-b " + tone}>
      <svg width="18" height="16" viewBox="0 0 18 16" fill="#555">{children}</svg>
    </button>
  );
}

const Line = ({ cells }) => (
  <div className="flex h-[15px] items-center">
    {cells.map(([t, w], i) => (
      <span key={i} className={"text-right whitespace-nowrap " + w}>{t}</span>
    ))}
  </div>
);

function Meter({ label, lit }) {
  return (
    <div className="flex h-[14px] items-center gap-1">
      <span className="w-[15px] text-right font-['Liberation_Mono',monospace] text-[7px] font-bold">{label}</span>
      <div className="flex h-[10px] w-[38px] bg-[repeating-linear-gradient(90deg,#4f4c40_0_1px,#3c3b39_1px_2px)]">{lit && <span className="w-[4px] bg-[#c4c4c4]" />}</div>
    </div>
  );
}

function Transport() {
  return (
    <footer className="mx-[6px] mt-[2px] flex h-[45px] items-center rounded-[6px] border border-[#8a8a8a] border-t-[#e2e2e2] bg-linear-to-b from-[#cacaca] to-[#a6a6a6]">
      <div className="ml-[45px] flex gap-[6px] rounded-full bg-linear-to-b from-[#8c8c8c] to-[#a6a6a6] px-[2px] py-[2px]">
        <Round label="Go to beginning"><path d="M4 3h1.500v10H4zM13 3v10L6.500 8z" /></Round>
        <Round label="Play from selection"><rect x="2.500" y="2.500" width="13" height="11" fill="none" stroke="#555" strokeDasharray="1 1.500" strokeWidth="1.300" /><path d="M5 4v8l6-4z" /></Round>
        <Round label="Rewind"><path d="M9 3.500v9L2 8zM16 3.500v9L9 8z" /></Round>
        <Round label="Forward"><path d="M2 3.500v9L9 8zM9 3.500v9L16 8z" /></Round>
        <Round label="Stop" tone="border-[#444c5a] from-[#bcc2cc] to-[#9298a2]"><path d="M5.500 4.500h7v7h-7z" fill="#333a44" /></Round>
        <Round label="Play"><path d="M6 3.500v9L13 8z" /></Round>
        <Round label="Pause"><path d="M5 3.500h3v9H5zM10 3.500h3v9h-3z" /></Round>
        <Round label="Record"><circle cx="9" cy="8" r="4" /></Round>
      </div>
      <div className="ml-[22px] flex h-[37px] w-[547px] divide-x divide-[#292929] rounded-[5px] border border-[#333] bg-linear-to-b from-[#4a4848] to-[#3d3b3b] pt-1 font-['Liberation_Sans',sans-serif] text-[13px] text-[#d6dadc]">
        <div className="w-[126px]">
          <Line cells={[["01", "w-[22px]"], [":", "w-[7px]"], ["02", "w-[18px]"], [":", "w-[8px]"], ["13", "w-[18px]"], [":", "w-[8px]"], ["06.77", "w-[36px]"]]} />
          <Line cells={[["78", "w-[45px]"], ["3", "w-[21px]"], ["4", "w-[22px]"], ["224", "w-[29px]"]]} />
        </div>
        <div className="w-[120px]">
          <Line cells={[["78", "w-[41px]"], ["1", "w-[21px]"], ["1", "w-[21px]"], ["1", "w-[30px]"]]} />
          <Line cells={[["79", "w-[41px]"], ["1", "w-[21px]"], ["1", "w-[21px]"], ["1", "w-[30px]"]]} />
        </div>
        <div className="w-[71px]">
          <Line cells={[["140.0000", "w-[64px]"]]} />
          <Line cells={[["114", "w-[64px]"]]} />
        </div>
        <div className="w-[50px]">
          <Line cells={[["4/4", "w-[32px]"]]} />
          <Line cells={[["/16", "w-[39px]"]]} />
        </div>
        <div className="w-[109px] pl-[14px]">
          <Line cells={[["No In", ""]]} />
          <Line cells={[["No Out", ""]]} />
        </div>
        <div className="pt-px pl-1">
          <Meter label="CPU" lit />
          <Meter label="HD" />
        </div>
      </div>
      <div className="ml-[22px] flex gap-[6px] rounded-full bg-linear-to-b from-[#8c8c8c] to-[#a6a6a6] px-[2px] py-[2px]">
        <Round label="Low latency"><path d="M9 1.500a7 7 0 0 0-6 10.500l2 2.500 2-1.500h4l2 1.500 2-2.500A7 7 0 0 0 9 1.500z" /><path d="M8 11l5-7M3.500 8h2M5 4.500l1.200 1.200M9 3v1.500M12.500 8H15" stroke="#ccc" strokeWidth="1.200" /></Round>
        <Round label="Cycle" tone="border-[#1f9a38] from-[#a8f5ab] to-[#3fd25a] shadow-[0_0_4px_#3de85c]">
          <path d="M5 11.500a3.500 3.500 0 0 1 .5-6.500H13M13 4.500a3.500 3.500 0 0 1-.5 6.500H5.500" fill="none" stroke="#1e6a2e" strokeWidth="2" />
          <path d="M11 2v6l3.500-3zM7.500 8v6L4 11z" fill="#1e6a2e" />
        </Round>
        <Round label="Autopunch"><path d="M5 1h2v4h2L6 8.500 3 5h2zM11 8.500h2V4.500h2L12 1 9 4.500h2zM2 10h14v1.500H2zM4 12.500h10V15H4z" /></Round>
        <Round label="Replace"><path d="M4 1.500h10v10L12 14H6l-2-2.500z" /><path d="M6 4l6 7M12 4l-6 7" stroke="#ccc" strokeWidth="1.300" /></Round>
        <Round label="Solo"><rect x="4" y="1.500" width="10" height="13" rx="1" /><path d="M11.500 4.500H7v3.300h4v3.500H6.500" fill="none" stroke="#ddd" strokeWidth="1.500" /></Round>
        <Round label="Click"><path d="M9 1h1.500L15 12H6zM4 13h12v1.500H4z" /><path d="M2 3l7 9" stroke="#555" strokeWidth="1.500" /></Round>
      </div>
      <div className="mr-4 ml-auto flex items-center gap-[7px]">
        <svg width="9" height="10" viewBox="0 0 9 10"><path d="M0 3h2.500L6 0v10L2.500 7H0z" fill="#333" /><path d="M7.500 3.500q1 1.500 0 3" stroke="#333" fill="none" /></svg>
        <input
          type="range"
          aria-label="Master volume"
          defaultValue="71"
          className="h-[11px] w-20 appearance-none bg-transparent [&::-webkit-slider-runnable-track]:h-[4px] [&::-webkit-slider-runnable-track]:rounded-full [&::-webkit-slider-runnable-track]:border [&::-webkit-slider-runnable-track]:border-[#777] [&::-webkit-slider-runnable-track]:bg-[#d5d5d5] [&::-webkit-slider-thumb]:-mt-[5px] [&::-webkit-slider-thumb]:h-[11px] [&::-webkit-slider-thumb]:w-[11px] [&::-webkit-slider-thumb]:appearance-none [&::-webkit-slider-thumb]:rounded-full [&::-webkit-slider-thumb]:border [&::-webkit-slider-thumb]:border-[#444] [&::-webkit-slider-thumb]:bg-[#d9d9d9]"
        />
        <svg width="14" height="12" viewBox="0 0 14 12"><path d="M0 4h2.500L6 1v10L2.500 8H0z" fill="#333" /><path d="M7.500 4q1.500 2 0 4M9.500 2.500q2.500 3.500 0 7M11.500 1q3.500 5 0 10" stroke="#333" fill="none" /></svg>
      </div>
    </footer>
  );
}

/* ---------- window ---------- */

const Light = ({ label, dot }) => (
  <button aria-label={label} className="flex h-[14px] w-[14px] items-center justify-center rounded-full border-2 border-[#5c5c5c] bg-linear-to-b from-[#8a8a8a] to-[#efefef]">
    {dot && <span className="h-[5px] w-[5px] rounded-full bg-[#333]" />}
  </button>
);

export default function App() {
  return (
    <div className="flex min-h-screen flex-col bg-[#151515] pt-px font-['DejaVu_Sans_Condensed','DejaVu_Sans',sans-serif] text-[#111]">
      <div className="flex flex-1 flex-col rounded-[7px] bg-linear-to-b from-[#a6a6a6] to-[#b0b0b0]">
        <header>
          <div className="relative flex h-[21px] items-center justify-center rounded-t-[7px] border-b border-[#9c9c9c] bg-linear-to-b from-[#d6d6d6] to-[#c6c6c6] pr-5">
            <div className="absolute top-[3px] left-[7px] flex gap-[6px]">
              <Light label="Close" dot />
              <Light label="Minimize" />
              <Light label="Zoom" />
            </div>
            <h1 className="flex items-center gap-1 font-['DejaVu_Sans',sans-serif] text-[13px] leading-[18px] whitespace-nowrap">
              <svg width="13" height="15" viewBox="0 0 13 15"><path d="M.5.500h9l3 3v11H.5z" fill="#d5d5d5" stroke="#999" /><rect x="1" y="5" width="11" height="5" fill="#707080" /><path d="M3 6v3M5 5.500v4M7 6v3M9 5.500v4M11 6v3" stroke="#ccc" /></svg>
              Dubstep Course Demo Project – Arrange
            </h1>
            <button aria-label="Toggle toolbar" className="absolute top-[6px] right-[7px] h-[10px] w-[20px] rounded-full border-2 border-[#777] bg-[#dcdcdc]" />
          </div>
          <div className="flex h-[49px] items-start bg-linear-to-b from-[#c6c6c6] to-[#b0b0b0] px-[13px] pt-[7px]">
            <div className="flex gap-[11px]">
              <ToolButton label="Inspector" w="w-[43px]"><InfoIcon /></ToolButton>
              <ToolButton label="Preferences" w="w-[54px]"><PrefIcon /></ToolButton>
              <ToolButton label="Settings" w="w-[38px]"><SettingsIcon /></ToolButton>
              <Sep />
              <ToolButton label="Auto Zoom" w="w-[50px]"><AutoZoomIcon /></ToolButton>
              <ToolButton label="Automation" w="w-[54px]"><AutomationIcon /></ToolButton>
              <ToolButton label="Flex" w="w-[20px]"><FlexIcon /></ToolButton>
              <Sep />
              <ToolButton label="Set Locators" w="w-[56px]"><LocatorsIcon /></ToolButton>
              <ToolButton label="Repeat Section" w="w-[67px]"><RepeatIcon /></ToolButton>
              <ToolButton label="Crop" w="w-[22px]"><CropIcon /></ToolButton>
              <ToolButton label="Split by Playhead" w="w-[79px]"><SplitIcon /></ToolButton>
            </div>
            <div className="ml-auto flex gap-[11px]">
              <ToolButton label="Bounce Regions" w="w-[73px]"><BounceIcon /></ToolButton>
              <ToolButton label="Bounce" w="w-[33px]"><BounceIcon up /></ToolButton>
              <ToolButton label="Colors" w="w-[29px]"><ColorsIcon /></ToolButton>
              <Sep />
              <ToolButton label="Notes" w="w-[26px]"><NotesIcon /></ToolButton>
              <ToolButton label="Lists" w="w-[22px]"><ListsIcon /></ToolButton>
              <ToolButton label="Media" w="w-[27px]"><MediaIcon /></ToolButton>
            </div>
          </div>
        </header>
        <div className="flex flex-1 gap-[3px] pr-px pl-[7px]">
          <Inspector />
          <Arrange />
        </div>
        <Transport />
        <div className="h-[9px] shrink-0" />
      </div>
    </div>
  );
}
